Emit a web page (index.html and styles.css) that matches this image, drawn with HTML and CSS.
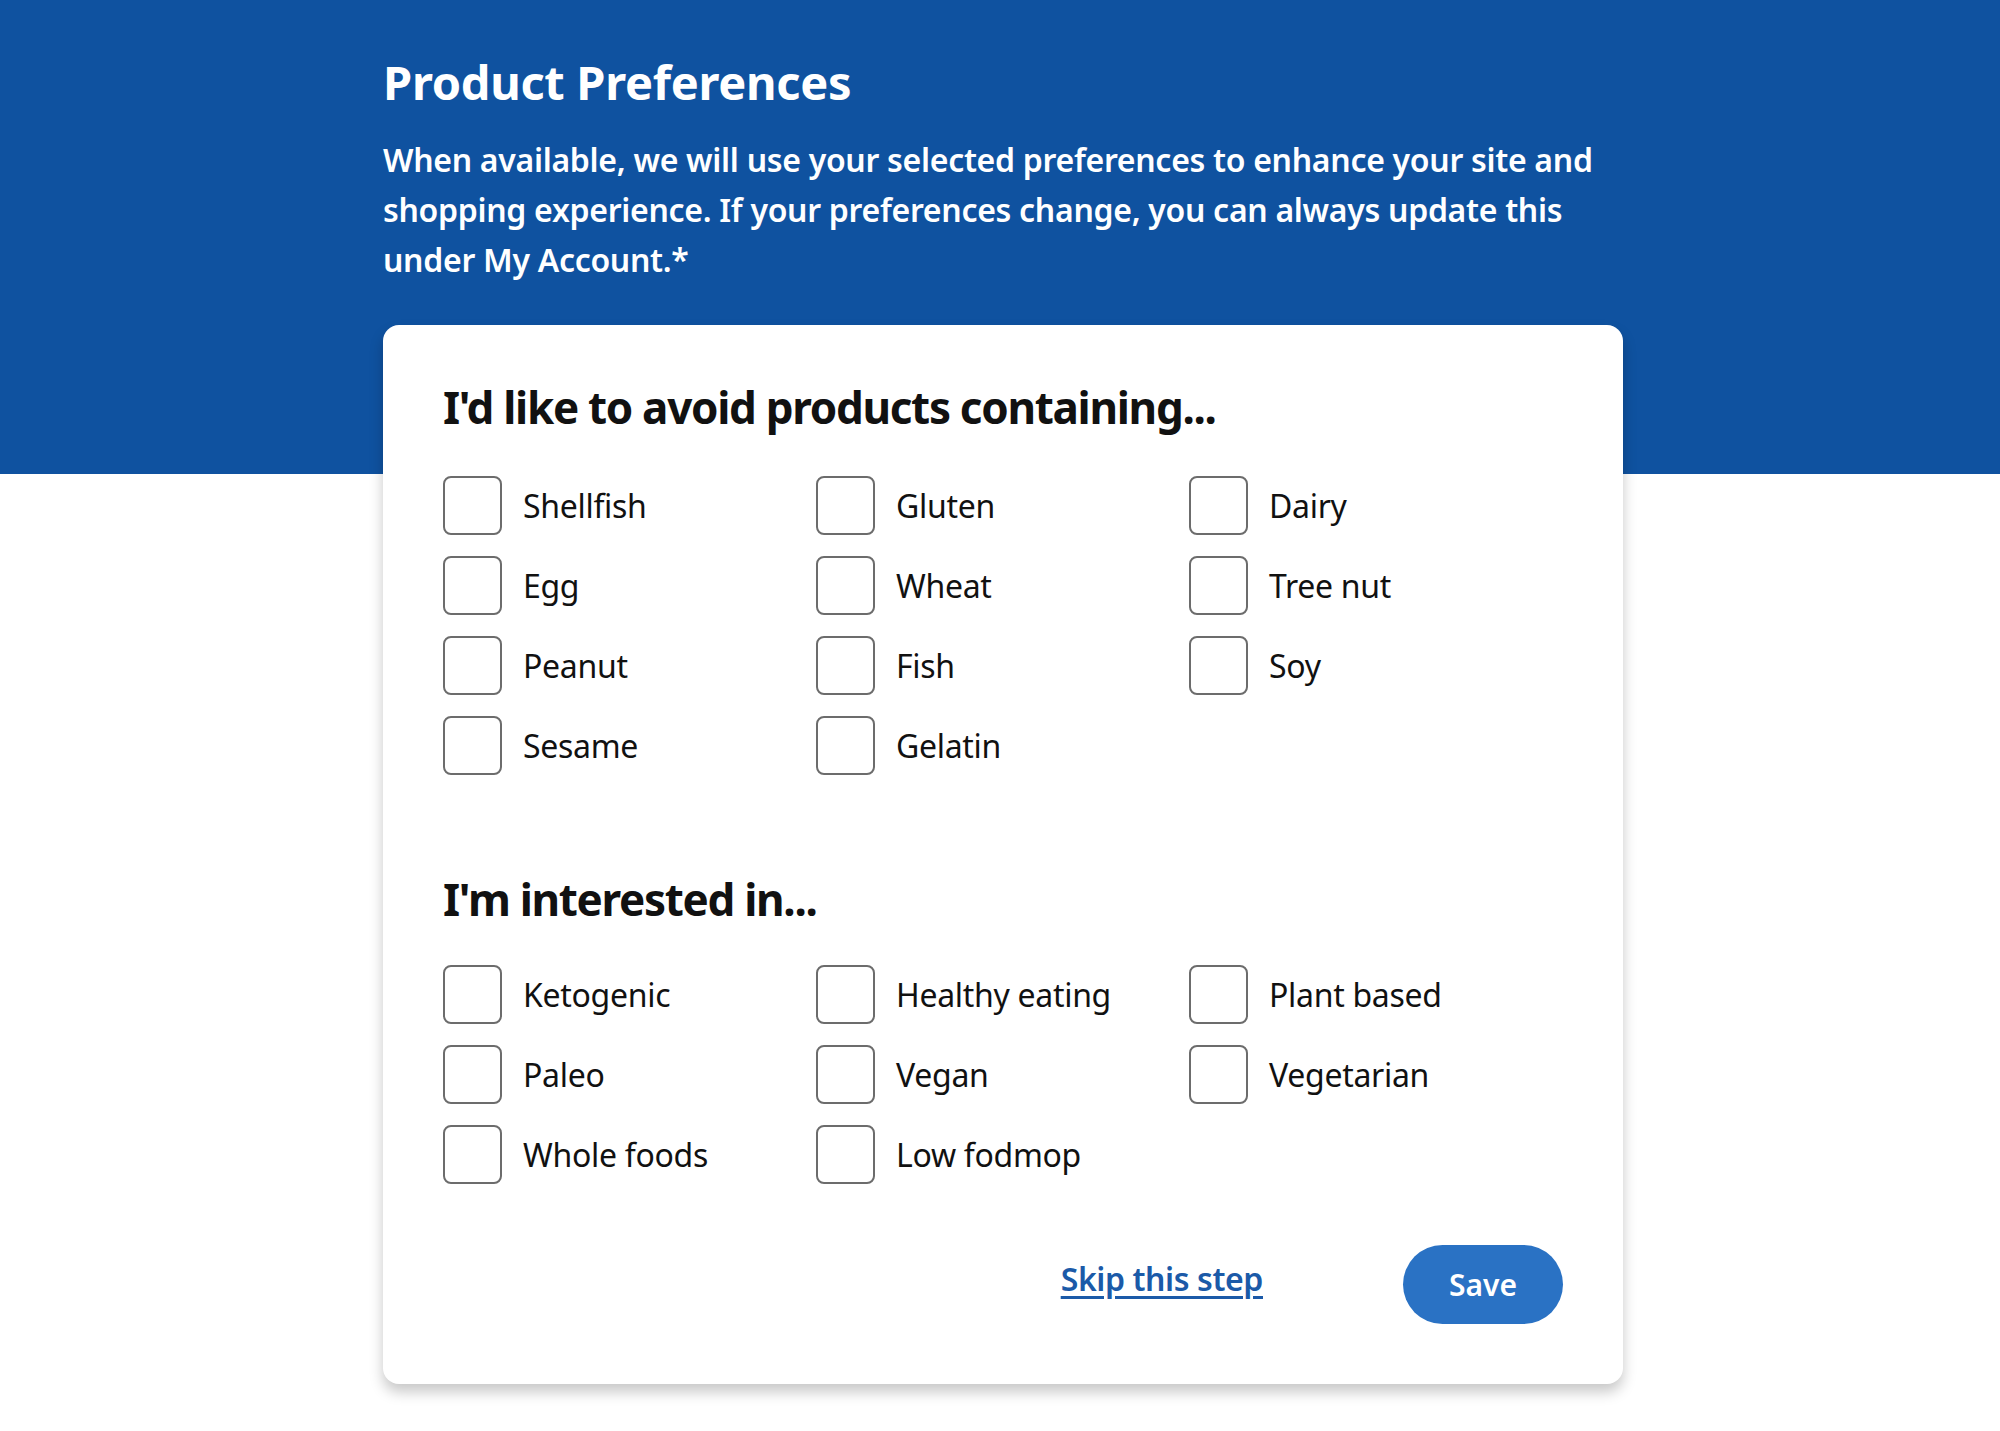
FILE: index.html
```html
<!DOCTYPE html>
<html lang="en">
<head>
<meta charset="utf-8">
<title>Product Preferences</title>
<link rel="stylesheet" href="styles.css">
</head>
<body>
<div class="page">
  <div class="wrap">
    <h1 class="title">Product Preferences</h1>
    <p class="intro">When available, we will use your selected preferences to enhance your site and shopping experience. If your preferences change, you can always update this under My Account.*</p>
    <form class="card">
      <h2 class="section-title">I'd like to avoid products containing...</h2>
      <div class="options">
        <label class="option"><span class="box"></span><span class="label">Shellfish</span></label>
        <label class="option"><span class="box"></span><span class="label">Gluten</span></label>
        <label class="option"><span class="box"></span><span class="label">Dairy</span></label>
        <label class="option"><span class="box"></span><span class="label">Egg</span></label>
        <label class="option"><span class="box"></span><span class="label">Wheat</span></label>
        <label class="option"><span class="box"></span><span class="label">Tree nut</span></label>
        <label class="option"><span class="box"></span><span class="label">Peanut</span></label>
        <label class="option"><span class="box"></span><span class="label">Fish</span></label>
        <label class="option"><span class="box"></span><span class="label">Soy</span></label>
        <label class="option"><span class="box"></span><span class="label">Sesame</span></label>
        <label class="option"><span class="box"></span><span class="label">Gelatin</span></label>
      </div>
      <h2 class="section-title second">I'm interested in...</h2>
      <div class="options options-second">
        <label class="option"><span class="box"></span><span class="label">Ketogenic</span></label>
        <label class="option"><span class="box"></span><span class="label">Healthy eating</span></label>
        <label class="option"><span class="box"></span><span class="label">Plant based</span></label>
        <label class="option"><span class="box"></span><span class="label">Paleo</span></label>
        <label class="option"><span class="box"></span><span class="label">Vegan</span></label>
        <label class="option"><span class="box"></span><span class="label">Vegetarian</span></label>
        <label class="option"><span class="box"></span><span class="label">Whole foods</span></label>
        <label class="option"><span class="box"></span><span class="label">Low fodmop</span></label>
      </div>
      <div class="actions">
        <a class="skip" href="#">Skip this step</a>
        <button class="save" type="button">Save</button>
      </div>
    </form>
  </div>
</div>
</body>
</html>
```

FILE: styles.css
```css
html, body {
  margin: 0;
  padding: 0;
}
body {
  font-family: "Noto Sans", "Open Sans", sans-serif;
  color: #111;
  background: #fff;
}
.page {
  min-height: 1431px;
  background: linear-gradient(to bottom, #0f52a0 0, #0f52a0 474px, #fff 474px);
  padding-top: 1px;
}
.wrap {
  width: 1240px;
  margin-left: 383px;
}
.title {
  margin: 53px 0 0;
  font-size: 47px;
  line-height: 56px;
  font-weight: 700;
  color: #fff;
  letter-spacing: -0.3px;
}
.intro {
  margin: 25px 0 0;
  font-size: 32px;
  line-height: 50px;
  font-weight: 600;
  color: #fff;
  letter-spacing: -0.3px;
}
.card {
  margin-top: 40px;
  background: #fff;
  border-radius: 16px;
  box-shadow: 0 8px 14px rgba(0, 0, 0, 0.22);
  padding: 52px 60px 60px;
}
.section-title {
  margin: 0;
  font-size: 44px;
  line-height: 60px;
  font-weight: 700;
  color: #111;
  letter-spacing: -1.3px;
}
.section-title.second {
  margin-top: 94px;
}
.options {
  margin-top: 39px;
  display: grid;
  grid-template-columns: 373px 373px 373px;
  row-gap: 21px;
}
.options.options-second {
  margin-top: 36px;
}
.option {
  display: flex;
  align-items: center;
  gap: 21px;
  height: 59px;
  cursor: pointer;
}
.box {
  flex: none;
  width: 55px;
  height: 55px;
  border: 2px solid #6c6c6c;
  border-radius: 8px;
}
.label {
  font-size: 32px;
  color: #111;
  letter-spacing: -0.3px;
}
.actions {
  margin-top: 61px;
  display: flex;
  justify-content: flex-end;
  align-items: center;
  gap: 140px;
}
.skip {
  margin-bottom: 13px;
  font-size: 32px;
  font-weight: 600;
  color: #1b5aa8;
  text-decoration: underline;
  text-underline-offset: 5px;
  letter-spacing: -0.4px;
}
.save {
  width: 160px;
  height: 79px;
  border: none;
  border-radius: 40px;
  background: #2a72c4;
  color: #fff;
  font-family: "Noto Sans", "Open Sans", sans-serif;
  font-size: 30px;
  font-weight: 600;
  cursor: pointer;
}
```
